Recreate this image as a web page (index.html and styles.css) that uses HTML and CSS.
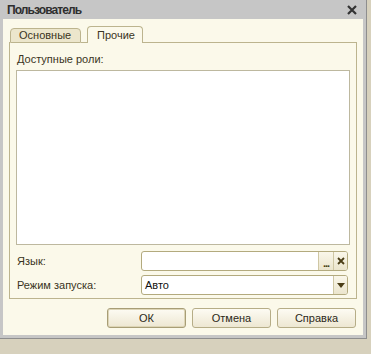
FILE: index.html
```html
<!DOCTYPE html>
<html lang="ru">
<head>
    <meta charset="UTF-8">
    <title>Пользователь</title>
    <link rel="stylesheet" href="styles.css">
</head>
<body>
    <div class="window">
        <header class="titlebar">
            <span class="title">Пользователь</span>
            <svg class="close" width="10" height="10" viewBox="0 0 10 10">
                <path d="M1 1 L9 9 M9 1 L1 9" stroke="#333" stroke-width="2.2" fill="none"/>
            </svg>
        </header>

        <div class="client">
            <div class="tabs">
                <div class="tab-gap first"></div>
                <div class="tab">Основные</div>
                <div class="tab-gap"></div>
                <div class="tab active">Прочие</div>
                <div class="tab-fill"></div>
            </div>

            <div class="panel">
                <div class="caption">Доступные роли:</div>
                <div class="listbox"></div>

                <div class="field-row lang">
                    <label>Язык:</label>
                    <div class="input">
                        <span class="value"></span>
                        <span class="btn-small dots">...</span>
                        <span class="btn-small clear">
                            <svg width="8" height="8" viewBox="0 0 8 8">
                                <path d="M1 1 L7 7 M7 1 L1 7" stroke="#4a3d16" stroke-width="1.8" fill="none"/>
                            </svg>
                        </span>
                    </div>
                </div>

                <div class="field-row mode">
                    <label>Режим запуска:</label>
                    <div class="input">
                        <span class="value">Авто</span>
                        <span class="btn-small drop">
                            <svg width="8" height="5" viewBox="0 0 8 5">
                                <path d="M0 0 H8 L4 5 Z" fill="#4a3d16"/>
                            </svg>
                        </span>
                    </div>
                </div>
            </div>

            <div class="buttons">
                <button class="btn default">ОК</button>
                <button class="btn">Отмена</button>
                <button class="btn">Справка</button>
            </div>
        </div>
    </div>
</body>
</html>
```

FILE: styles.css
```css
:root {
    --frame: #c6c6c6;
    --cream: #fbf9ea;
    --tan: #bcb48e;
    --text: #3a3422;
}

* {
    margin: 0;
    padding: 0;
    box-sizing: border-box;
    font-family: 'Liberation Sans', Arial, sans-serif;
}

body {
    background: #d7d1bd;
    width: 371px;
    height: 354px;
    overflow: hidden;
}

.window {
    width: 367px;
    height: 339px;
    background: var(--frame);
    border-right: 1px solid #8e8e8e;
    border-bottom: 1px solid #8e8e8e;
    padding: 0 3px 0 3px;
}

.titlebar {
    height: 19px;
    display: flex;
    align-items: center;
    justify-content: space-between;
    padding: 0 6px 0 4px;
}

.title {
    font-size: 12px;
    font-weight: bold;
    letter-spacing: -0.9px;
    color: #2e2e2e;
}

.close {
    display: block;
    margin-top: 1px;
}

.client {
    width: 360px;
    height: 316px;
    background: var(--cream);
    padding: 7px 6px 0 6px;
}

/* tabs */
.tabs {
    display: flex;
    align-items: flex-end;
    height: 17px;
}

.tab-gap,
.tab-fill {
    height: 1px;
    background: var(--tan);
}

.tab-gap {
    width: 6px;
}

.tab-gap.first {
    width: 1px;
}

.tab-fill {
    flex: 1;
}

.tab {
    height: 15px;
    width: 71px;
    border: 1px solid var(--tan);
    border-radius: 4px 4px 0 0;
    background: #ece6cc;
    font-size: 11px;
    color: var(--text);
    padding-left: 8px;
    line-height: 13px;
}

.tab.active {
    height: 17px;
    width: 56px;
    border-bottom: none;
    background: var(--cream);
    padding-left: 9px;
    line-height: 16px;
}

/* page */
.panel {
    width: 348px;
    height: 256px;
    border: 1px solid var(--tan);
    border-top: none;
    padding: 9px 6px 0 6px;
}

.caption {
    font-size: 11px;
    line-height: 14px;
    color: var(--text);
    padding-left: 1px;
}

.listbox {
    margin-top: 4px;
    height: 175px;
    background: #fff;
    border: 1px solid #bdb89f;
}

.field-row {
    display: grid;
    grid-template-columns: 125px 207px;
    align-items: center;
}

.field-row.lang {
    margin-top: 6px;
}

.field-row.mode {
    margin-top: 4px;
}

.field-row label {
    font-size: 11px;
    color: var(--text);
    padding-left: 1px;
}

.input {
    height: 20px;
    display: flex;
    background: #fff;
    border: 1px solid #b3aa7e;
    border-radius: 3px;
    overflow: hidden;
}

.input .value {
    flex: 1;
    font-size: 11px;
    line-height: 18px;
    color: #111;
    padding-left: 3px;
}

.btn-small {
    width: 15px;
    display: flex;
    align-items: center;
    justify-content: center;
    background: linear-gradient(#faf7ea, #ebe5cd);
    border-left: 1px solid #cfc7a4;
}

.btn-small.dots {
    font-size: 11px;
    font-weight: bold;
    color: #4a3d16;
    align-items: flex-end;
    line-height: 14px;
    letter-spacing: -1px;
}

.btn-small.clear {
    width: 14px;
}

.btn-small.drop {
    width: 14px;
}

/* dialog buttons */
.buttons {
    display: flex;
    justify-content: flex-end;
    gap: 6px;
    margin-top: 9px;
    padding-right: 1px;
}

.btn {
    width: 79px;
    height: 20px;
    font-size: 11px;
    color: #2c2818;
    background: linear-gradient(#fdfbf3, #ede7d2);
    border: 1px solid #b6ad87;
    border-radius: 3px;
}

.btn.default {
    box-shadow: inset 0 0 0 1px #ddd5b6;
    border-color: #a89e76;
}
```
